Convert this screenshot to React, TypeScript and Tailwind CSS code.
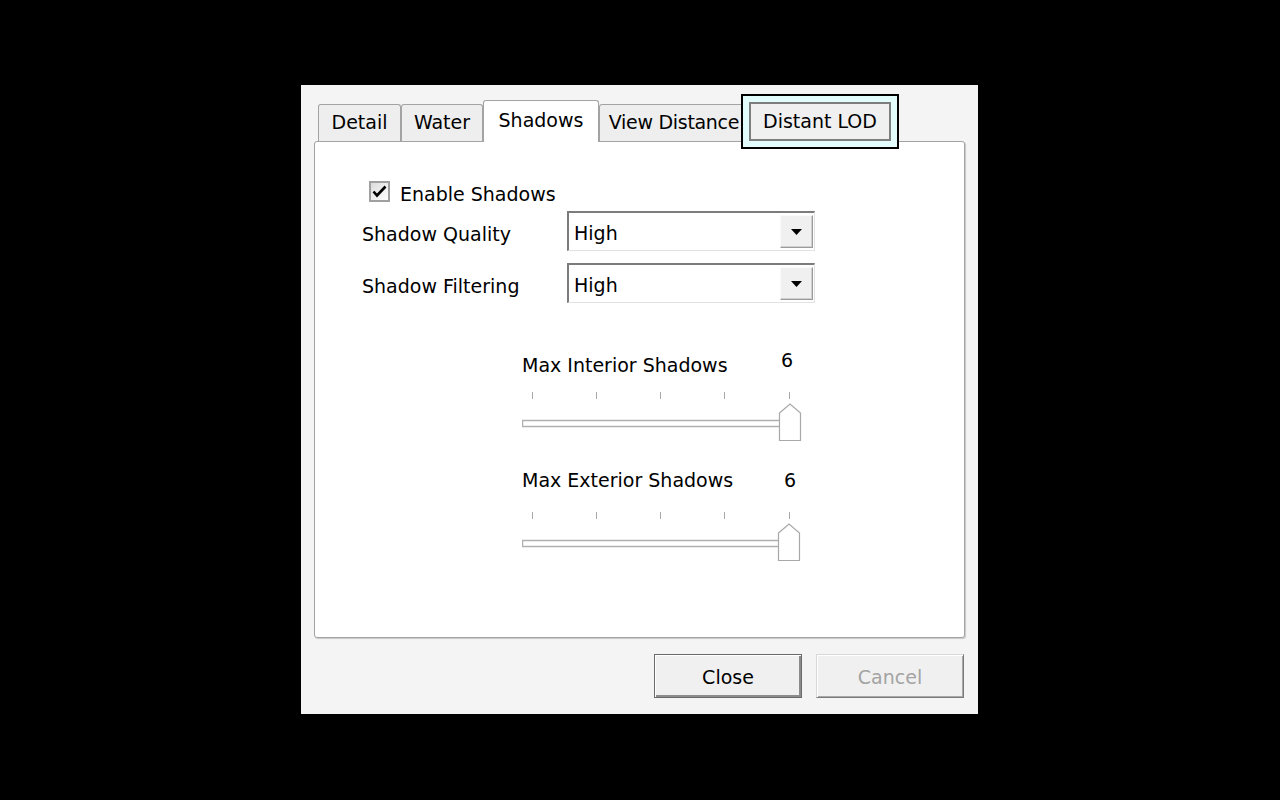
function Tab({ label, cls, selected = false }: { label: string; cls: string; selected?: boolean }) {
  return (
    <div
      className={
        selected
          ? `relative z-10 -mb-px flex h-[42px] items-center justify-center rounded-t-[3px] border border-b-0 border-[#a3a3a3] bg-white pb-[3px] ${cls}`
          : `flex h-[37px] items-center justify-center rounded-t-[3px] border border-b-0 border-[#a3a3a3] bg-[#eeeeee] pb-[2px] ${cls}`
      }
    >
      {label}
    </div>
  )
}

function Select({ value }: { value: string }) {
  return (
    <div className="flex h-[40px] w-[248px] items-center border-t-2 border-l-2 border-r border-b border-t-[#7c7c7c] border-l-[#7c7c7c] border-r-[#e2e2e2] border-b-[#e2e2e2] bg-white">
      <span className="flex-1 pl-[5px] pt-[4px]">{value}</span>
      <div className="mr-px flex h-[33px] w-[33px] items-center justify-center border border-t-[#fafafa] border-l-[#fafafa] border-r-[#9a9a9a] border-b-[#9a9a9a] bg-[#f0f0f0] shadow-[inset_-1px_-1px_0_#d0d0d0]">
        <svg width="11" height="6" viewBox="0 0 11 6">
          <path d="M0 0H11L5.5 6Z" fill="#000" />
        </svg>
      </div>
    </div>
  )
}

function SliderTrack({ thumb }: { thumb: number }) {
  const ticks = [10.5, 74.5, 138.5, 202.5, 267.5]
  return (
    <svg width="285" height="50" viewBox="0 0 285 50" className="block">
      {ticks.map((x) => (
        <line key={x} x1={x} y1="0" x2={x} y2="7" stroke="#a8a8a8" strokeWidth="1" />
      ))}
      <rect x="0.5" y="28.5" width={thumb + 4} height="6" fill="#fff" stroke="#b0b0b0" strokeWidth="1.5" />
      <path
        d={`M${thumb + 0.5} 21 L${thumb + 11} 12 L${thumb + 21.5} 21 L${thumb + 21.5} 48.5 L${thumb + 0.5} 48.5 Z`}
        fill="#fff"
        stroke="#a8a8a8"
        strokeWidth="1.2"
      />
    </svg>
  )
}

export default function App() {
  return (
    <div className="min-h-[800px] bg-black pl-[301px] pt-[85px] font-['DejaVu_Sans',sans-serif] text-[19px] leading-none text-black">
      <div className="h-[629px] w-[677px] bg-[#f4f4f4] pt-[15px]">
        {/* tabs */}
        <div className="ml-[17px] flex h-[41px] items-end">
          <Tab label="Detail" cls="w-[83px]" />
          <Tab label="Water" cls="w-[82px]" />
          <Tab label="Shadows" cls="w-[116px]" selected />
          <Tab label="View Distance" cls="w-[150px] tracking-[-0.3px]" />
          <div className="relative z-20 flex h-[39px] w-[142px] items-center justify-center border-2 border-[#7e7e7e] bg-[#f0f0f0] pb-[1px] shadow-[0_0_0_6px_#e2fbfb,0_0_0_8px_#000]">
            Distant LOD
          </div>
        </div>

        {/* panel */}
        <div className="ml-[13px] h-[497px] w-[651px] rounded-[3px] border border-[#a3a3a3] bg-white pl-[47px] pt-[39px] shadow-[1px_1px_1px_rgba(0,0,0,0.18)]">
          <div className="ml-[7px] flex h-[21px] items-center gap-[10px]">
            <div className="flex h-[21px] w-[21px] items-center justify-center border-2 border-[#a0a0a0] bg-gradient-to-br from-[#dcdcdc] to-white">
              <svg width="15" height="13" viewBox="0 0 15 13">
                <path d="M1.5 6.5 L5 10.5 L13.5 1.5" fill="none" stroke="#000" strokeWidth="2.6" />
              </svg>
            </div>
            <span className="pt-[6px]">Enable Shadows</span>
          </div>

          <div className="mt-[9px] flex items-center">
            <span className="w-[205px] pt-[7px]">Shadow Quality</span>
            <Select value="High" />
          </div>
          <div className="mt-[12px] flex items-center">
            <span className="w-[205px] pt-[7px]">Shadow Filtering</span>
            <Select value="High" />
          </div>

          {/* sliders */}
          <div className="ml-[160px] mt-[51px] w-[285px]">
            <div className="flex h-[22px] w-[275px] items-end justify-between pr-[4px]">
              <span className="pb-[1px]">Max Interior Shadows</span>
              <span className="mb-[6px]">6</span>
            </div>
            <div className="mt-[16px]">
              <SliderTrack thumb={257} />
            </div>

            <div className="mt-[27px] flex h-[22px] w-[275px] items-end justify-between pr-[1px]">
              <span className="pb-[1px]">Max Exterior Shadows</span>
              <span className="pb-[1px]">6</span>
            </div>
            <div className="mt-[21px]">
              <SliderTrack thumb={256} />
            </div>
          </div>
        </div>

        {/* buttons */}
        <div className="mt-[16px] flex justify-end gap-[14px] pr-[14px]">
          <button className="flex h-[44px] w-[148px] items-center justify-center border border-[#6a6a6a] bg-[#f0f0f0] pt-[2px] shadow-[inset_1px_1px_0_#ffffff,inset_-2px_-2px_0_#8c8c8c]">
            Close
          </button>
          <button className="flex h-[44px] w-[148px] items-center justify-center border border-t-[#d8d8d8] border-l-[#d8d8d8] border-r-[#7a7a7a] border-b-[#7a7a7a] bg-[#f0f0f0] pt-[2px] text-[#a3a3a3] shadow-[inset_1px_1px_0_#ffffff,inset_-1px_-1px_0_#a8a8a8]">
            Cancel
          </button>
        </div>
      </div>
    </div>
  )
}
